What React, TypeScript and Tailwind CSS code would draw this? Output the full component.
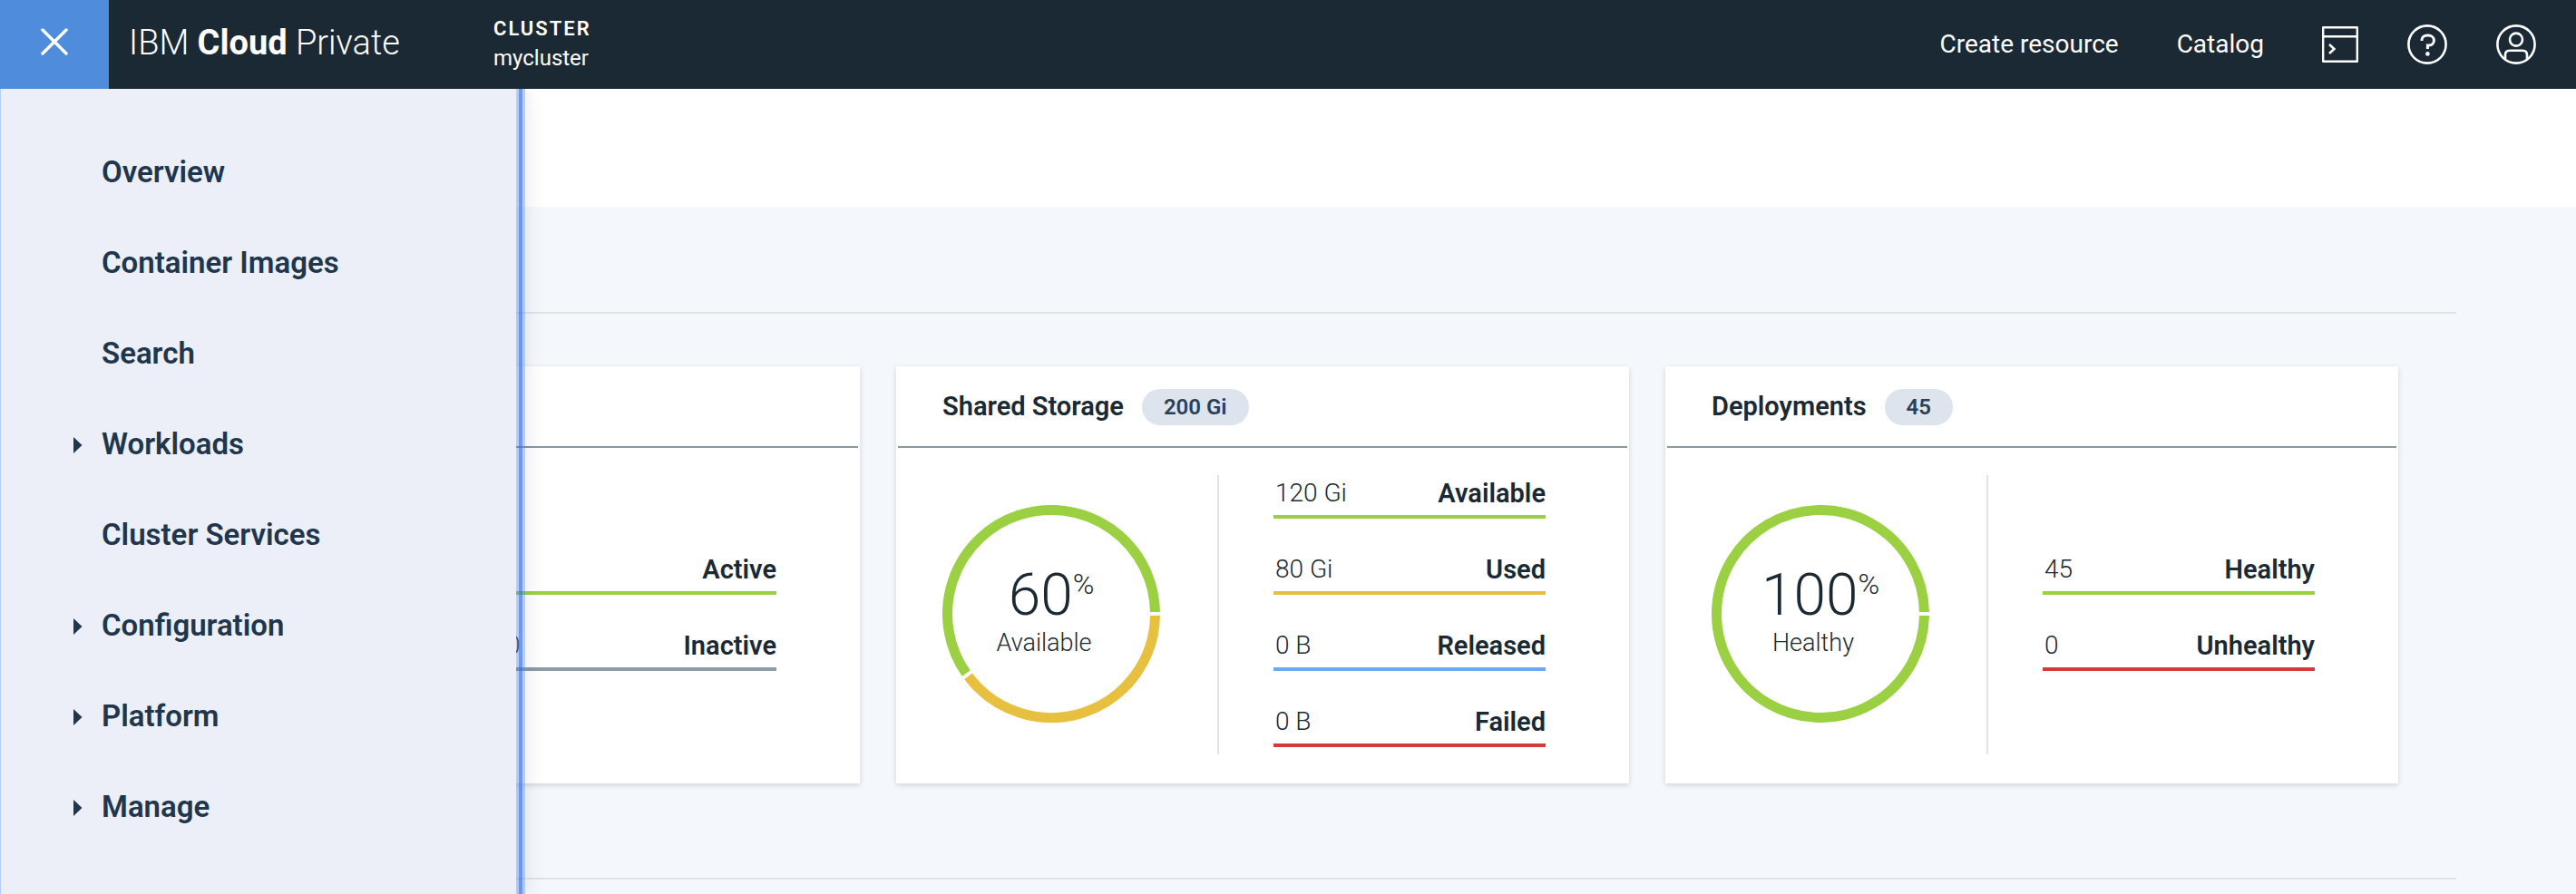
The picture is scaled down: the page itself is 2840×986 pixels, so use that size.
import React from "react";

const GREEN = "#9ad042";
const YELLOW = "#e8c040";

type Stat = { value: string; label: string; line: string };
type Segment = { from: number; to: number; color: string };

const navItems = [
  { label: "Overview", nested: false },
  { label: "Container Images", nested: false },
  { label: "Search", nested: false },
  { label: "Workloads", nested: true },
  { label: "Cluster Services", nested: false },
  { label: "Configuration", nested: true },
  { label: "Platform", nested: true },
  { label: "Manage", nested: true },
];

function point(radius: number, degrees: number) {
  const a = (degrees * Math.PI) / 180;
  return `${120 + radius * Math.cos(a)} ${120 + radius * Math.sin(a)}`;
}

function Donut({ segments, percent, caption }: { segments: Segment[]; percent: number; caption: string }) {
  const r = 114.5;
  return (
    <div className="relative mb-[2px] size-60">
      <svg viewBox="0 0 240 240" className="size-60" fill="none" strokeWidth="11" aria-hidden="true">
        {segments.map((s) => (
          <path
            key={s.from}
            stroke={s.color}
            d={`M${point(r, s.from + 1)} A${r} ${r} 0 ${s.to - s.from > 180 ? 1 : 0} 1 ${point(r, s.to - 1)}`}
          />
        ))}
      </svg>
      <div className="absolute inset-0 flex flex-col items-center pt-16">
        <div className="flex items-start font-light">
          <span className="text-[64px] leading-[72px]">{percent}</span>
          <span className="pt-1 text-[32px] leading-[38px]">%</span>
        </div>
        <div className="pr-4 text-[27px] leading-8 font-light">{caption}</div>
      </div>
    </div>
  );
}

function Card({
  title,
  total,
  donut,
  stats,
}: {
  title?: string;
  total?: string;
  donut?: React.ReactNode;
  stats: Stat[];
}) {
  return (
    <section className="flex flex-col bg-white p-[2px] shadow-[0_2px_6px_rgba(0,0,0,0.15)]">
      <div className="flex h-[88px] items-center border-b-2 border-[#8897a2] pl-[49px]">
        {title && <h2 className="text-[29px] font-semibold">{title}</h2>}
        {total && (
          <span className="ml-5 rounded-full bg-[#dde4ee] px-6 text-[24px] leading-10 font-semibold text-[#2d3f54]">
            {total}
          </span>
        )}
      </div>
      <div className="flex h-[368px] items-center pr-[90px] pl-[49px]">
        {donut}
        <div className="ml-auto h-[308px] w-[2px] bg-[#dfe3e6]" />
        <dl className="ml-[60px] flex w-[300px] flex-col gap-11">
          {stats.map((s) => (
            <div
              key={s.label}
              className={`flex h-10 flex-row-reverse justify-between border-b-4 leading-6 ${s.line}`}
            >
              <dt className="text-[29px] font-semibold">{s.label}</dt>
              <dd className="pl-[2px] text-[28px] font-light">{s.value}</dd>
            </div>
          ))}
        </dl>
      </div>
    </section>
  );
}

function Header() {
  return (
    <header className="relative z-20 flex h-[98px] shrink-0 items-center bg-[#1a2933] text-white">
      <button type="button" aria-label="Close menu" className="flex h-full w-[120px] items-center justify-center bg-[#4f8cdc] pb-[6px]">
        <svg viewBox="0 0 30 30" className="size-[30px]" stroke="currentColor" strokeWidth="3.4" strokeLinecap="round" aria-hidden="true">
          <path d="M2 2 28 28M28 2 2 28" />
        </svg>
      </button>
      <a href="#" className="w-[402px] pb-1 pl-[22px] text-[38px] leading-[48px] font-light whitespace-nowrap">
        IBM <b className="font-bold">Cloud</b> Private
      </a>
      <div className="ml-[22px] pb-[2px]">
        <div className="text-[22px] leading-8 font-semibold tracking-[2px]">CLUSTER</div>
        <div className="text-[24px] leading-8">mycluster</div>
      </div>
      <nav className="ml-auto flex items-center gap-16 pr-11 text-[28px]">
        <a href="#">Create resource</a>
        <a href="#">Catalog</a>
        <div className="flex items-center gap-[54px]">
          <button type="button" aria-label="Terminal">
            <svg viewBox="0 0 40 40" className="size-10" fill="none" stroke="currentColor" strokeWidth="2.4" strokeLinejoin="round" aria-hidden="true">
              <path d="M1.2 1.2h37.6v37.6H1.2zM1.2 11.2h37.6" />
              <path d="M8 20l5.4 5L8 30" strokeWidth="2.6" strokeLinejoin="miter" />
            </svg>
          </button>
          <button type="button" aria-label="Help">
            <svg viewBox="0 0 44 44" className="size-11" fill="none" stroke="currentColor" strokeWidth="2.6" aria-hidden="true">
              <circle cx="22" cy="22" r="20.6" />
              <path d="M16 18v-1c0-3 2.6-5 6-5h1c3.6 0 6.4 2.2 6.4 5.6S26.6 23 24 23h-1.6v4" strokeWidth="3" />
              <circle cx="22.4" cy="32.4" r="2.3" fill="currentColor" stroke="none" />
            </svg>
          </button>
          <button type="button" aria-label="Account">
            <svg viewBox="0 0 44 44" className="size-11" fill="none" stroke="currentColor" strokeWidth="2.6" aria-hidden="true">
              <circle cx="22" cy="22" r="20.6" />
              <circle cx="22" cy="16.6" r="7" />
              <path d="M10 38.5v-5c0-3 2-4.700 5-4.700h14c3 0 5 1.700 5 4.700v5" />
            </svg>
          </button>
        </div>
      </nav>
    </header>
  );
}

function SideMenu() {
  return (
    <aside className="absolute inset-y-0 left-0 z-10 flex shadow-[2px_0_20px_rgba(0,0,0,0.09)]">
      <nav aria-label="Main" className="w-[569px] border-l border-[#b4cdf5] bg-[#eceff8] pt-[42px] pl-20">
        <ul>
          {navItems.map((item) => (
            <li key={item.label}>
              <a href="#" className="flex h-[100px] items-center text-[33px] font-semibold text-[#20364d]">
                <span className="w-[31px]">
                  {item.nested && (
                    <svg viewBox="0 0 10 18" className="mt-[2px] h-[18px] w-[10px]" fill="currentColor" aria-hidden="true">
                      <path d="M0 0l9.5 9L0 18z" />
                    </svg>
                  )}
                </span>
                {item.label}
              </a>
            </li>
          ))}
        </ul>
      </nav>
      <div className="w-[10px] border-x-[3px] border-[#4b83e8]/40 bg-[#2f6fe6]/70 bg-clip-padding" />
    </aside>
  );
}

export default function App() {
  return (
    <div className="flex min-h-screen flex-col bg-[#f4f7fb] font-['Roboto','Noto_Sans',sans-serif] text-[#1a2933]">
      <Header />
      <div className="relative flex-1">
        <SideMenu />
        <div className="h-[130px] bg-white" />
        <main className="px-[132px] pt-[116px]">
          <div className="border-y-2 border-[#dfe3e6] pt-[58px] pr-16 pb-[104px] pl-2">
            <div className="grid grid-cols-3 gap-10">
              <Card
                stats={[
                  { value: "1", label: "Active", line: "border-[#9ad042]" },
                  { value: "0", label: "Inactive", line: "border-[#8c9ba5]" },
                ]}
              />
              <Card
                title="Shared Storage"
                total="200 Gi"
                donut={
                  <Donut
                    percent={60}
                    caption="Available"
                    segments={[
                      { from: 0, to: 144, color: YELLOW },
                      { from: 144, to: 360, color: GREEN },
                    ]}
                  />
                }
                stats={[
                  { value: "120 Gi", label: "Available", line: "border-[#9ad042]" },
                  { value: "80 Gi", label: "Used", line: "border-[#e8c040]" },
                  { value: "0 B", label: "Released", line: "border-[#6aaaf4]" },
                  { value: "0 B", label: "Failed", line: "border-[#d73a3a]" },
                ]}
              />
              <Card
                title="Deployments"
                total="45"
                donut={<Donut percent={100} caption="Healthy" segments={[{ from: 0, to: 360, color: GREEN }]} />}
                stats={[
                  { value: "45", label: "Healthy", line: "border-[#9ad042]" },
                  { value: "0", label: "Unhealthy", line: "border-[#d73a3a]" },
                ]}
              />
            </div>
          </div>
        </main>
      </div>
    </div>
  );
}
